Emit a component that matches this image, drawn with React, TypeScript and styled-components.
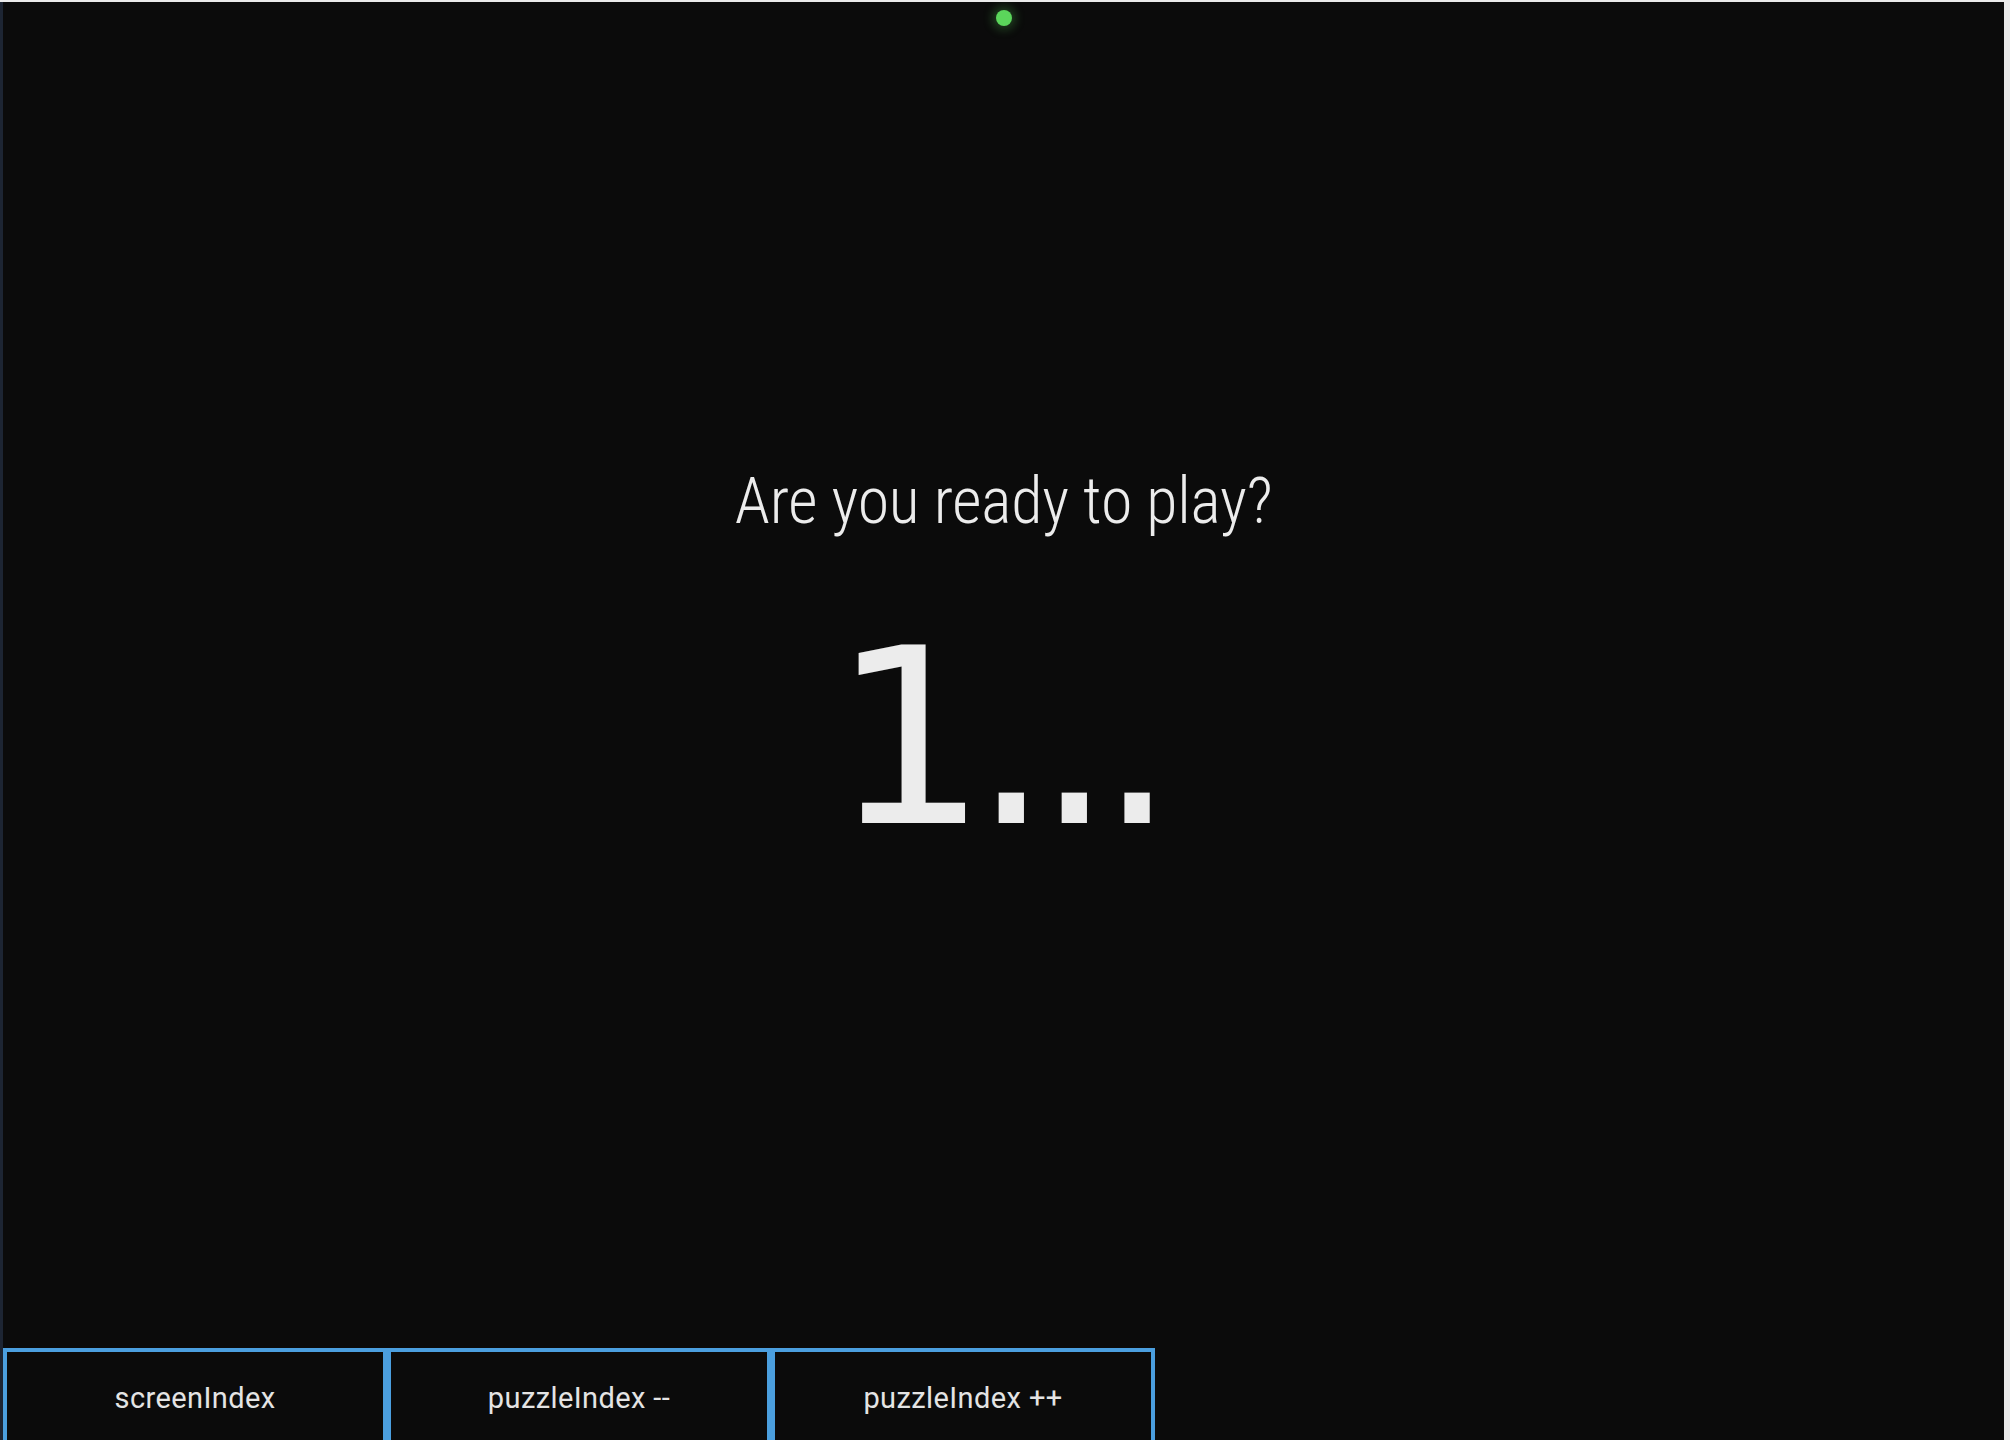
import React from "react";
import styled, { createGlobalStyle } from "styled-components";

const GlobalStyle = createGlobalStyle`
  html, body {
    margin: 0;
    padding: 0;
    background: #ebebeb;
    overflow: hidden;
  }
  #root {
    height: 1440px;
  }
`;

const Frame = styled.div`
  box-sizing: border-box;
  height: 1440px;
  padding: 2px 6px 0 0;
  display: flex;
  background: #ebebeb;
`;

const Screen = styled.main`
  flex: 1;
  display: flex;
  flex-direction: column;
  background: #0b0b0b;
  border-left: 3px solid #1d2533;
  overflow: hidden;
  font-family: "Roboto", "Liberation Sans", sans-serif;
  color: #ececec;
`;

const Stage = styled.section`
  flex: 1;
  display: flex;
  flex-direction: column;
  align-items: center;
  padding-top: 8px;
`;

const StatusDot = styled.span<{ $color: string }>`
  width: 16px;
  height: 16px;
  border-radius: 50%;
  background: ${(p) => p.$color};
  box-shadow: 0 0 10px 4px ${(p) => p.$color}40;
`;

const Prompt = styled.h1`
  margin: 444px 0 0;
  font-family: "Roboto", "Liberation Sans", sans-serif;
  font-stretch: 75%;
  font-weight: 350;
  font-size: 64px;
  line-height: 64px;
  letter-spacing: -0.2px;
  color: #ececec;
`;

const Countdown = styled.div`
  margin-top: 82px;
  margin-left: -14px;
  font-family: "DejaVu Sans", sans-serif;
  font-weight: 400;
  font-size: 245px;
  line-height: 245px;
  letter-spacing: -15px;
  color: #ececec;
`;

const ButtonBar = styled.nav`
  display: flex;
  height: 92px;
  flex: none;
  overflow: visible;
`;

const DebugButton = styled.button`
  box-sizing: border-box;
  width: 384px;
  height: 100px;
  flex: none;
  margin: 0;
  padding: 0;
  background: #0b0b0b;
  border: 4px solid #4b9fdf;
  color: #e4e4e4;
  font-family: "Roboto", "Liberation Sans", sans-serif;
  font-weight: 400;
  font-size: 29px;
  letter-spacing: 0.4px;
  cursor: pointer;
`;

export default function App() {
  const buttons = ["screenIndex", "puzzleIndex --", "puzzleIndex ++"];
  return (
    <>
      <GlobalStyle />
      <Frame>
        <Screen>
          <Stage>
            <StatusDot $color="#5bd65b" />
            <Prompt>Are you ready to play?</Prompt>
            <Countdown>1...</Countdown>
          </Stage>
          <ButtonBar>
            {buttons.map((label) => (
              <DebugButton key={label}>{label}</DebugButton>
            ))}
          </ButtonBar>
        </Screen>
      </Frame>
    </>
  );
}
